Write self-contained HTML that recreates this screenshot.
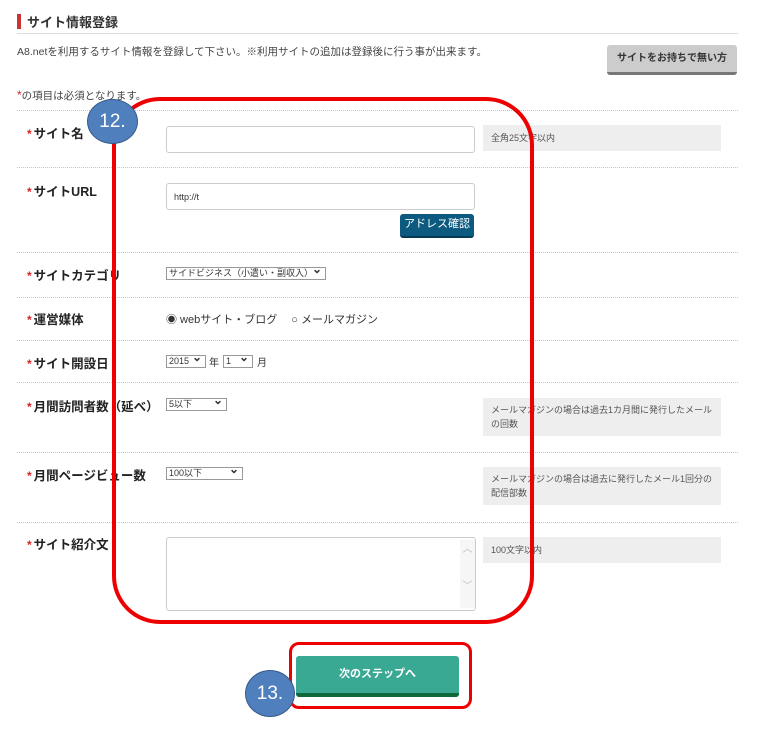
<!DOCTYPE html>
<html><head><meta charset="utf-8"><style>
*{margin:0;padding:0;box-sizing:border-box}
body{width:758px;height:730px;background:#fff;position:relative;overflow:hidden;font-family:"Liberation Sans","Noto Sans CJK JP",sans-serif;color:#333}
.a{position:absolute;white-space:nowrap}
.dl{position:absolute;left:17px;width:721px;border-top:1px dotted #c4c4c4}
.lb{position:absolute;left:27px;font-size:12.5px;font-weight:bold;color:#222}
.lb b{color:#d22;font-size:12px;margin-right:2px}
.in{position:absolute;border:1px solid #ccc;border-radius:3px;background:#fff}
.hint{position:absolute;left:483px;width:238px;background:#eee;font-size:9px;color:#555;padding:0 8px;line-height:14px}
.sel{position:absolute;border:1px solid #999;background:#fff;font-size:9px;height:13px;line-height:11px;padding-left:2px;color:#333}
.sel:after{content:"⌄";position:absolute;right:3px;top:-4px;font-size:12px;font-weight:bold}
.circ{position:absolute;border-radius:50%;background:#4f7fbc;border:1.5px solid #36598a;color:#fff;font-size:19px;text-align:center}
</style></head><body>
<div class="a" style="left:17px;top:14px;width:4px;height:15px;background:#c33"></div>
<div class="a" style="left:27px;top:12px;font-size:13px;font-weight:bold;color:#333">サイト情報登録</div>
<div class="a" style="left:17px;top:33px;width:721px;border-top:1px solid #ddd"></div>
<div class="a" style="left:17px;top:44px;font-size:10.5px;color:#444">A8.netを利用するサイト情報を登録して下さい。※利用サイトの追加は登録後に行う事が出来ます。</div>
<div class="a" style="left:607px;top:45px;width:130px;height:30px;background:#ccc;border-radius:3px;border-bottom:3px solid #777;font-size:10px;font-weight:bold;text-align:center;line-height:28px;color:#333">サイトをお持ちで無い方</div>
<div class="a" style="left:17px;top:88px;font-size:10.5px;color:#444"><span style="color:#d22;font-size:12px">*</span>の項目は必須となります。</div>
<div class="dl" style="top:110px"></div>
<div class="dl" style="top:167px"></div>
<div class="dl" style="top:252px"></div>
<div class="dl" style="top:297px"></div>
<div class="dl" style="top:340px"></div>
<div class="dl" style="top:382px"></div>
<div class="dl" style="top:452px"></div>
<div class="dl" style="top:522px"></div>

<div class="lb" style="top:123px"><b>*</b>サイト名</div>
<div class="lb" style="top:181px"><b>*</b>サイトURL</div>
<div class="lb" style="top:265px"><b>*</b>サイトカテゴリ</div>
<div class="lb" style="top:309px"><b>*</b>運営媒体</div>
<div class="lb" style="top:353px"><b>*</b>サイト開設日</div>
<div class="lb" style="top:396px"><b>*</b>月間訪問者数（延べ）</div>
<div class="lb" style="top:465px"><b>*</b>月間ページビュー数</div>
<div class="lb" style="top:534px"><b>*</b>サイト紹介文</div>

<div class="in" style="left:166px;top:126px;width:309px;height:27px"></div>
<div class="hint" style="top:125px;height:26px;line-height:26px">全角25文字以内</div>
<div class="in" style="left:166px;top:183px;width:309px;height:27px;font-size:9px;padding:8px 7px">http://t</div>
<div class="a" style="left:400px;top:214px;width:74px;height:24px;background:#0d5a80;border-radius:3px;border-bottom:2px solid #053a55;color:#fff;font-size:11px;text-align:center;line-height:21px">アドレス確認</div>
<div class="sel" style="left:166px;top:267px;width:160px">サイドビジネス（小遣い・副収入）</div>
<div class="a" style="left:166px;top:311px;font-size:11px;color:#333">◉ webサイト・ブログ　 ○ メールマガジン</div>
<div class="sel" style="left:166px;top:355px;width:40px">2015</div>
<div class="a" style="left:209px;top:354px;font-size:10px">年</div>
<div class="sel" style="left:223px;top:355px;width:30px">1</div>
<div class="a" style="left:257px;top:354px;font-size:10px">月</div>
<div class="sel" style="left:166px;top:398px;width:61px">5以下</div>
<div class="hint" style="top:398px;height:38px;padding-top:5px">メールマガジンの場合は過去1カ月間に発行したメールの回数</div>
<div class="sel" style="left:166px;top:467px;width:77px">100以下</div>
<div class="hint" style="top:467px;height:38px;padding-top:5px">メールマガジンの場合は過去に発行したメール1回分の配信部数</div>
<div class="in" style="left:166px;top:537px;width:310px;height:74px"></div>
<div class="a" style="left:460px;top:540px;width:15px;height:68px;background:#f6f6f6;color:#bbb;font-size:10px;text-align:center">︿<br><br><br>﹀</div>
<div class="hint" style="top:537px;height:26px;line-height:26px">100文字以内</div>

<div class="a" style="left:112px;top:97px;width:422px;height:527px;border:4px solid #e00;border-radius:48px"></div>
<div class="circ" style="left:87px;top:99px;width:51px;height:45px;line-height:43px">12.</div>

<div class="a" style="left:296px;top:656px;width:163px;height:41px;background:#3aa994;border-radius:3px;border-bottom:4px solid #0d6a3a;color:#fff;font-size:11px;font-weight:bold;text-align:center;line-height:36px">次のステップへ</div>
<div class="a" style="left:289px;top:642px;width:183px;height:67px;border:3px solid #e00;border-radius:10px"></div>
<div class="circ" style="left:245px;top:670px;width:50px;height:47px;line-height:45px">13.</div>
</body></html>
